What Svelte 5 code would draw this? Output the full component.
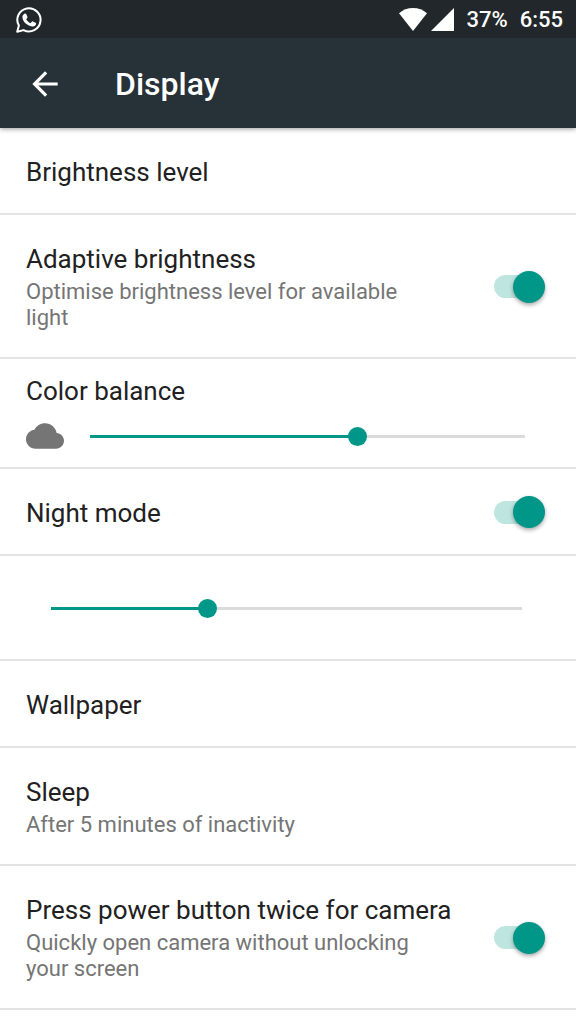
<script lang="ts">
	let adaptive = $state(true);
	let nightMode = $state(true);
	let powerCamera = $state(true);
	let balance = $state(62);
	let nightLevel = $state(65);
</script>

{#snippet toggleText(id: string, title: string, summary: string)}
	<label class="text" for={id}>
		<span class="title">{title}</span>
		{#if summary}
			<span class="summary">{summary}</span>
		{/if}
	</label>
{/snippet}

<div class="screen">
	<div class="status-bar">
		<svg class="chat" viewBox="0 0 26 26" aria-hidden="true">
			<path
				d="M1.2 24.8L2.9 18.6A11.6 11.6 0 1 1 7.6 23.1Z"
				fill="none"
				stroke="#fff"
				stroke-width="2"
				stroke-linejoin="round"
			/>
			<path
				d="M8.4 6.7c.6-.5 1.4-.4 1.8.3l1.2 2.8c.2.5.1.9-.2 1.300l-1 1.200c1 1.800 2.400 3.100 4.300 3.900l1.300-1.500c.3-.4.7-.4 1.100-.2l2.700 1.300c.5.3.6.6.5 1.200-.4 1.800-2.200 2.700-4 2.500-5.300-.9-9.200-4.900-9.700-9.300-.1-1.500.700-2.700 2-3.500z"
				fill="#fff"
			/>
		</svg>
		<div class="status-right">
			<svg class="wifi" viewBox="0 0 28 23" aria-hidden="true">
				<path d="M14 23L0 5.2C4 1.9 8.8 0 14 0s10 1.9 14 5.2z" fill="#fff" />
			</svg>
			<svg class="signal" viewBox="0 0 23 23" aria-hidden="true">
				<path d="M0 23L23 0v23z" fill="#fff" />
			</svg>
			<span class="battery">37%</span>
			<span>6:55</span>
		</div>
	</div>

	<header class="toolbar">
		<button class="back" aria-label="Back">
			<svg viewBox="0 0 24 24" aria-hidden="true">
				<path d="M20 11H7.83l5.59-5.59L12 4l-8 8 8 8 1.41-1.41L7.83 13H20v-2z" fill="#fff" />
			</svg>
		</button>
		<h1>Display</h1>
	</header>

	<main>
		<button class="row">
			<span class="title">Brightness level</span>
		</button>

		<div class="row">
			{@render toggleText('adaptive', 'Adaptive brightness', 'Optimise brightness level for available light')}
			<input id="adaptive" class="switch" type="checkbox" bind:checked={adaptive} />
		</div>

		<div class="row balance">
			<label class="title" for="balance">Color balance</label>
			<div class="balance-control">
				<svg class="cloud" viewBox="0 4 24 16" aria-hidden="true">
					<path
						d="M19.35 10.04C18.67 6.59 15.64 4 12 4 9.11 4 6.6 5.64 5.35 8.04 2.34 8.36 0 10.91 0 14c0 3.31 2.69 6 6 6h13c2.76 0 5-2.24 5-5 0-2.64-2.05-4.78-4.65-4.96z"
						fill="#757575"
					/>
				</svg>
				<input
					id="balance"
					class="slider"
					type="range"
					max="100"
					bind:value={balance}
					style="--level: {balance / 100}"
				/>
			</div>
		</div>

		<div class="row">
			{@render toggleText('night', 'Night mode', '')}
			<input id="night" class="switch" type="checkbox" bind:checked={nightMode} />
		</div>

		<div class="row night-level">
			<input
				class="slider"
				type="range"
				max="200"
				aria-label="Night mode level"
				bind:value={nightLevel}
				style="--level: {nightLevel / 200}"
			/>
		</div>

		<button class="row">
			<span class="title">Wallpaper</span>
		</button>

		<button class="row">
			<span class="text">
				<span class="title">Sleep</span>
				<span class="summary">After 5 minutes of inactivity</span>
			</span>
		</button>

		<div class="row">
			{@render toggleText('camera', 'Press power button twice for camera', 'Quickly open camera without unlocking your screen')}
			<input id="camera" class="switch" type="checkbox" bind:checked={powerCamera} />
		</div>
	</main>
</div>

<style>
	:global(body) {
		background: #fff;
	}

	.screen {
		font-family: Roboto, sans-serif;
		color: #212121;
	}

	.status-bar {
		position: relative;
		z-index: 1;
		display: flex;
		justify-content: space-between;
		align-items: center;
		height: 38px;
		padding: 1px 13px 0 16px;
		box-sizing: border-box;
		background: #21272b;
	}

	.chat {
		width: 26px;
		height: 26px;
	}

	.status-right {
		display: flex;
		align-items: center;
		gap: 12px;
		color: #fff;
		font-size: 22px;
		font-weight: 500;
		line-height: 38px;
	}

	.wifi {
		width: 28px;
		height: 23px;
		margin-right: -8px;
	}

	.signal {
		width: 23px;
		height: 23px;
	}

	.toolbar {
		display: flex;
		align-items: center;
		gap: 51px;
		height: 90px;
		padding: 1px 26px 0;
		box-sizing: border-box;
		background: #263238;
		box-shadow: 0 1px 5px rgba(0, 0, 0, 0.4);
	}

	.back {
		padding: 0;
		border: none;
		background: none;
		cursor: pointer;
	}

	.back svg {
		display: block;
		width: 38px;
		height: 38px;
	}

	h1 {
		margin: 0;
		color: #fff;
		font-size: 32px;
		font-weight: 500;
		line-height: 38px;
	}

	.row {
		display: flex;
		align-items: center;
		justify-content: space-between;
		width: 100%;
		box-sizing: border-box;
		padding: 29px 31px 26px 26px;
		border: none;
		border-bottom: 2px solid #e4e4e4;
		background: none;
		color: inherit;
		font: inherit;
		text-align: left;
	}

	.text {
		display: flex;
		flex-direction: column;
		gap: 5px;
	}

	.title {
		font-size: 26px;
		line-height: 30px;
		white-space: nowrap;
	}

	.summary {
		max-width: 400px;
		color: #757575;
		font-size: 22px;
		line-height: 26px;
	}

	.balance {
		flex-direction: column;
		align-items: stretch;
		gap: 17px;
		padding: 17px 51px 18px 26px;
	}

	.balance-control {
		display: flex;
		align-items: center;
		gap: 26px;
	}

	.cloud {
		flex: none;
		width: 38px;
		height: 26px;
	}

	.night-level {
		padding: 39px 54px 38px 51px;
	}

	.slider {
		appearance: none;
		flex: 1;
		min-width: 0;
		height: 26px;
		margin: 0;
		background: none;
	}

	.slider::-webkit-slider-runnable-track {
		height: 3px;
		background: linear-gradient(
			to right,
			#009688 calc(var(--level) * (100% - 19px) + 9px),
			#dbdbdb calc(var(--level) * (100% - 19px) + 9px)
		);
	}

	.slider::-webkit-slider-thumb {
		appearance: none;
		width: 19px;
		height: 19px;
		margin-top: -8px;
		border-radius: 50%;
		background: #009688;
	}

	.switch {
		appearance: none;
		display: flex;
		align-items: center;
		flex: none;
		width: 51px;
		height: 32px;
		margin: -2px 0 0;
		cursor: pointer;
	}

	.switch::before {
		content: '';
		width: 46px;
		height: 23px;
		border-radius: 12px;
		background: #bdbdbd;
	}

	.switch::after {
		content: '';
		flex: none;
		width: 32px;
		height: 32px;
		margin-left: -51px;
		border-radius: 50%;
		background: #fafafa;
		box-shadow: 0 2px 4px rgba(0, 0, 0, 0.35);
	}

	.switch:checked::before {
		background: #bfe5e1;
	}

	.switch:checked::after {
		margin-left: -27px;
		background: #009688;
	}
</style>
